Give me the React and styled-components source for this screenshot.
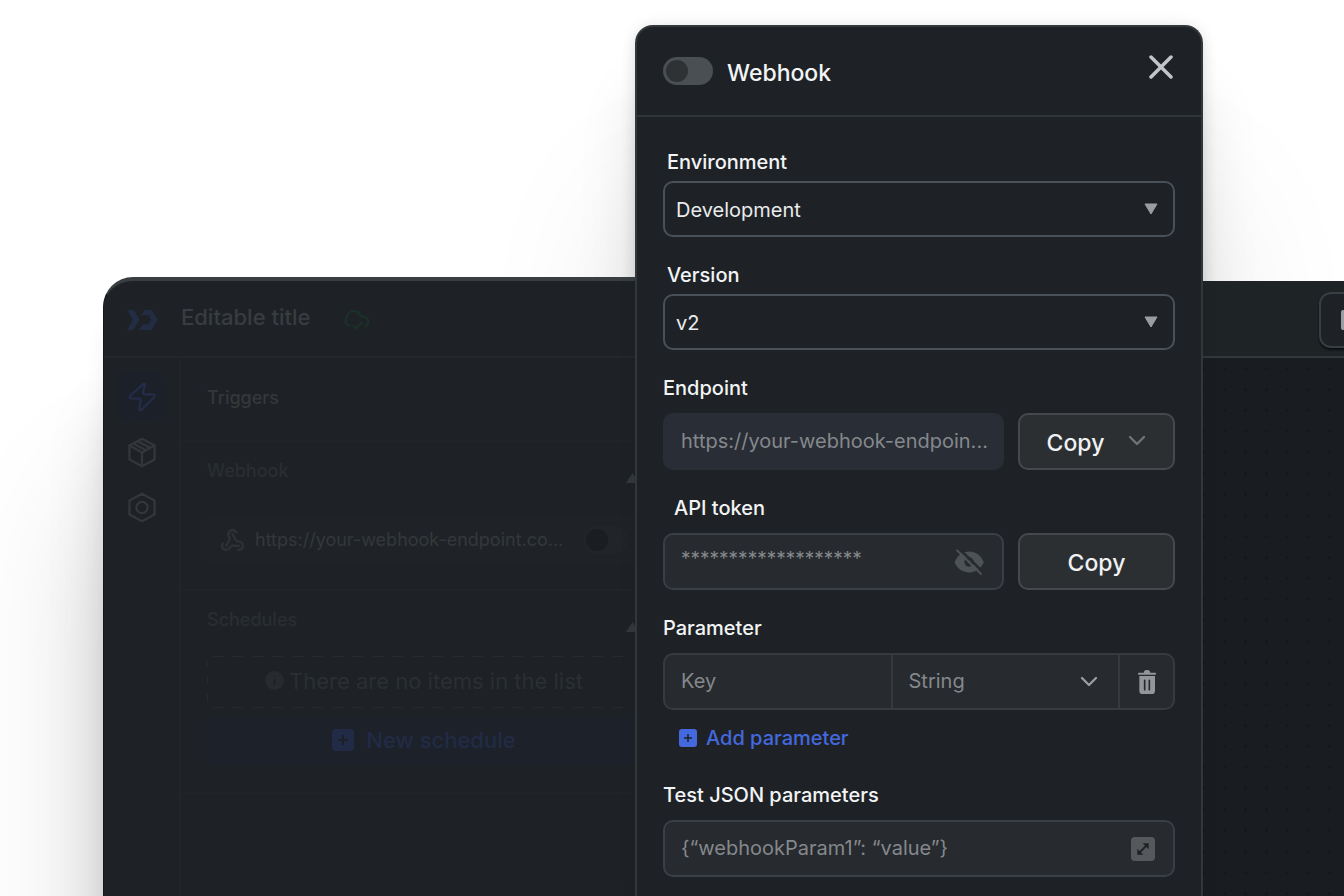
import React from "react";
import styled, { createGlobalStyle } from "styled-components";
import { Webhook as WebhookGlyph } from "lucide-react";

const GlobalStyle = createGlobalStyle`
  *, *::before, *::after { box-sizing: border-box; }
  body {
    margin: 0;
    background: #ffffff;
    font-family: Inter, "Noto Sans", sans-serif;
    font-size: 20px;
    line-height: 24px;
  }
  h1, h2, h3 { margin: 0; font-weight: 500; }
  p { margin: 0; }
  button, input, select { font: inherit; margin: 0; }
  button { cursor: pointer; }
  svg { display: block; flex: none; }
`;

/* ---------- stage ---------- */

const Stage = styled.div`
  display: grid;
  grid-template-columns: minmax(0, 1fr);
  min-height: 100vh;
  overflow: hidden;
  & > * { grid-area: 1 / 1; }
`;

const DialogShade = styled.div`
  justify-self: end;
  width: 568px;
  margin: 25px 141px 0 0;
  border-radius: 18px 18px 0 0;
  box-shadow: 0 180px 160px rgba(0, 0, 0, 0.11), 0 70px 60px rgba(0, 0, 0, 0.1), 0 6px 16px rgba(0, 0, 0, 0.07);
`;

/* ---------- editor window ---------- */

const Editor = styled.main`
  display: flex;
  margin: 277px -52px 0 103px;
`;

const EditorPane = styled.div`
  flex: 1;
  min-width: 0;
  display: flex;
  flex-direction: column;
  background: #1e2226;
  border-top: 4px solid #393e42;
  border-left: 1px solid #15181b;
  border-radius: 30px 0 0 0;
  box-shadow: 0 220px 150px rgba(0, 0, 0, 0.16), 0 130px 60px rgba(0, 0, 0, 0.12), 0 40px 20px rgba(0, 0, 0, 0.06);
`;

const PaneHeader = styled.header`
  display: flex;
  align-items: center;
  height: 77px;
  padding: 2px 23px 0;
  border-bottom: 2px solid #23272a;
`;

const EditorTitle = styled.h1`
  margin: 0 34px 0 23px;
  padding-bottom: 6px;
  font-size: 22px;
  color: #393c40;
  white-space: nowrap;
`;

const EditorBody = styled.div`
  flex: 1;
  display: flex;
`;

const SideNav = styled.nav`
  display: flex;
  flex-direction: column;
  align-items: center;
  gap: 5px;
  width: 77px;
  padding-top: 14px;
  border-right: 2px solid #212529;
`;

const NavButton = styled.button`
  display: grid;
  place-items: center;
  width: 50px;
  height: 50px;
  padding: 0;
  border: 0;
  border-radius: 14px;
  background: ${(p) => (p.$active ? "#1c2029" : "transparent")};
  color: ${(p) => (p.$active ? "#232c49" : "#33363a")};
`;

const TriggerPanel = styled.div`
  width: 486px;
`;

const PanelSection = styled.section`
  display: flex;
  flex-direction: column;
  padding: 17px 26px ${(p) => p.$bottom}px;
  border-bottom: 2px solid #202427;
`;

const PanelTitle = styled.h2`
  padding: 27px 26px 29px;
  border-bottom: 2px solid #202427;
  font-size: 18px;
  line-height: 26px;
  color: #35383b;
`;

const SectionHead = styled.div`
  display: flex;
  align-items: flex-end;
  justify-content: space-between;
  margin-bottom: ${(p) => p.$gap}px;
  padding-right: 2px;
  color: #2a2e31;
`;

const SectionName = styled.h3`
  font-size: 18px;
`;

const HookCard = styled.div`
  display: flex;
  align-items: center;
  height: 52px;
  padding: 0 13px;
  border-radius: 8px;
  background: #1f2327;
  color: #2d3134;
`;

const HookUrl = styled.span`
  flex: 1;
  margin-left: 10px;
  font-size: 18px;
  color: #34383b;
  white-space: nowrap;
`;

const dash = "#272b2e";
const EmptyBox = styled.div`
  display: flex;
  align-items: center;
  justify-content: center;
  gap: 5px;
  height: 52px;
  padding-bottom: 3px;
  border-radius: 8px;
  color: #2b2f32;
  font-size: 22px;
  background:
    repeating-linear-gradient(90deg, transparent 0 6px, ${dash} 6px 16px, transparent 16px 20px) top / 100% 1px no-repeat,
    repeating-linear-gradient(90deg, transparent 0 6px, ${dash} 6px 16px, transparent 16px 20px) bottom / 100% 1px no-repeat,
    repeating-linear-gradient(0deg, transparent 0 6px, ${dash} 6px 14px, transparent 14px 18px) left / 1px 100% no-repeat;
`;

const NewScheduleButton = styled.button`
  display: flex;
  align-items: center;
  justify-content: center;
  gap: 12px;
  height: 47px;
  margin-top: 10px;
  padding: 0 0 4px;
  border: 0;
  border-radius: 8px;
  background: #1d222a;
  color: #212b45;
  font-size: 22px;
  font-weight: 500;
`;

/* ---------- canvas on the right ---------- */

const CanvasPane = styled.div`
  flex: 0 0 436px;
  display: flex;
  flex-direction: column;
  margin-top: 4px;
  background: #1e2326;
`;

const CanvasHeader = styled(PaneHeader)`
  justify-content: flex-end;
  padding: 3px 21px 0;
  border-bottom-color: #34383b;
`;

const ToolButton = styled.button`
  display: grid;
  place-items: center;
  width: 56px;
  height: 56px;
  padding: 0;
  border: 2px solid #393e45;
  border-radius: 12px;
  background: #1e2226;
  box-shadow: 0 2px 2px #0d0f11;
  color: #9b9ea1;
`;

const DotGrid = styled.div`
  flex: 1;
  background: radial-gradient(circle, #15181b 1px, transparent 2px) 2px 0 / 21px 21px #191c20;
`;

/* ---------- dialog ---------- */

const Dialog = styled.section`
  position: relative;
  justify-self: end;
  width: 568px;
  margin: 25px 141px 0 0;
  border: 2px solid #32373a;
  border-bottom: 0;
  border-radius: 18px 18px 0 0;
  background: #1e2226;
  color: #f2f4f5;
  box-shadow: 0 0 16px rgba(0, 0, 0, 0.08);
`;

const DialogHeader = styled.header`
  display: flex;
  align-items: center;
  gap: 14px;
  height: 90px;
  padding: 0 28px 0 26px;
  border-bottom: 2px solid #2f3437;
`;

const Toggle = styled.input.attrs({ type: "checkbox", role: "switch" })`
  appearance: none;
  flex: none;
  width: ${(p) => (p.$dim ? 45 : 50)}px;
  height: 28px;
  padding: 3px;
  border-radius: 14px;
  background: ${(p) => (p.$dim ? "#212529" : "#4a4f53")};
  cursor: pointer;
  &::before {
    content: "";
    display: block;
    width: 22px;
    height: 22px;
    border-radius: 50%;
    background: ${(p) => (p.$dim ? "#1a1d21" : "#2e3235")};
  }
  &:checked::before { margin-left: auto; }
`;

const DialogTitle = styled.h2`
  flex: 1;
  padding-top: 3px;
  font-size: 23px;
  line-height: 28px;
`;

const IconButton = styled.button`
  display: grid;
  place-items: center;
  padding: 0;
  border: 0;
  background: transparent;
  color: ${(p) => p.$color || "#c3c6c8"};
`;

const CloseButton = styled(IconButton)`
  margin-bottom: 8px;
`;

const DialogBody = styled.form`
  display: flex;
  flex-direction: column;
  gap: 26px;
  padding: 33px 26px 16px;
`;

const FieldGroup = styled.div`
  display: flex;
  flex-direction: column;
  gap: ${(p) => (p.$tight ? 7 : 13)}px;
`;

const FieldLabel = styled.label`
  padding-left: ${(p) => p.$indent || 0}px;
  font-weight: 500;
`;

const SelectBox = styled.div`
  flex: 1;
  min-width: 0;
  display: grid;
  align-items: center;
  & > * { grid-area: 1 / 1; }
  & > svg {
    justify-self: end;
    margin-right: 17px;
    pointer-events: none;
    color: #9a9da1;
  }
`;

const SelectInput = styled.select`
  appearance: none;
  width: 100%;
  height: 56px;
  padding: 2px 40px 0 11px;
  border: 2px solid #4a5058;
  border-radius: 10px;
  background: transparent;
  color: #e9ebed;
`;

const Field = styled.div`
  display: flex;
  align-items: center;
  height: 57px;
  padding: 0 ${(p) => (p.$filled ? 8 : 18)}px 0 16px;
  border: 2px solid ${(p) => (p.$filled ? "#292d35" : "#393f45")};
  border-radius: 10px;
  background: ${(p) => (p.$filled ? "#292d35" : "#272a2e")};
`;

const FieldRow = styled.div`
  display: flex;
  gap: 14px;
  & > ${Field} {
    flex: 1;
    min-width: 0;
  }
`;

const TextInput = styled.input`
  flex: 1;
  min-width: 0;
  width: 100%;
  height: 28px;
  padding: 0 0 2px;
  border: 0;
  outline: 0;
  background: transparent;
  color: #84888c;
  text-overflow: ellipsis;
  &::placeholder { color: #84888c; opacity: 1; }
`;

const TokenInput = styled(TextInput)`
  height: 32px;
  padding-bottom: 6px;
  font-size: 19px;
`;

const CopyButton = styled.button`
  display: flex;
  align-items: center;
  justify-content: center;
  gap: 24px;
  flex: 0 0 157px;
  height: 57px;
  padding: 2px 0 0;
  border: 2px solid #45494c;
  border-radius: 10px;
  background: #2b2f32;
  color: #f0f1f2;
  font-size: 23px;
  font-weight: 500;
  & > svg { margin-bottom: 4px; color: #6f7478; }
`;

const ParamRow = styled.div`
  display: flex;
  height: 57px;
  border: 2px solid #373b3f;
  border-radius: 10px;
  background: #272a2e;
`;

const ParamCell = styled.div`
  display: flex;
  align-items: center;
  justify-content: center;
  flex: ${(p) => (p.$fixed ? "0 0 55px" : "1 1 0")};
  min-width: 0;
  padding: 0 ${(p) => (p.$fixed ? 0 : 16)}px;
  & + & { border-left: 2px solid #373b3f; }
`;

const TypeSelectBox = styled(SelectBox)`
  & > svg { margin-right: 4px; }
`;

const TypeSelect = styled.select`
  appearance: none;
  width: 100%;
  height: 28px;
  padding: 0 0 2px;
  border: 0;
  background: transparent;
  color: #84888c;
`;

const AddButton = styled.button`
  display: flex;
  align-items: center;
  align-self: flex-start;
  gap: 9px;
  height: 40px;
  margin: -5px 0 -1px;
  padding: 0 16px;
  border: 0;
  background: transparent;
  color: #4468de;
  font-weight: 500;
`;

/* ---------- drawings ---------- */

const Logo = () => (
  <svg width="31" height="20" viewBox="0 0 93 61" fill="#232c45" aria-hidden="true">
    <path d="M0 0H20L38 30 18 61H0L17 30Z" />
    <path d="M52 0H74L93 30 74 61H35L46 44H64L73 30 65 15H44Z" />
  </svg>
);

const CloudSaved = () => (
  <svg width="26" height="20" viewBox="0 0 78 60" fill="none" stroke="#1b3229" strokeWidth="6" strokeLinecap="round" strokeLinejoin="round" aria-hidden="true">
    <path d="M15 46C3 42 1 28 9 21C11 9 21 3 31 4C42 5 48 12 51 20C64 17 73 26 73 35C73 42 69 46 64 49" />
    <path d="M28 47L36 55 53 38" />
  </svg>
);

const Bolt = () => (
  <svg width="28" height="30" viewBox="0 0 84 90" fill="none" stroke="currentColor" strokeWidth="7" strokeLinejoin="round" aria-hidden="true">
    <path d="M47 5L6 42Q2 49 10 50H33Q39 50 38 56L34 82Q35 88 40 84L79 45Q82 38 75 37H50Q44 36 45 30L51 8Q51 3 47 5Z" />
  </svg>
);

const Cube = () => (
  <svg width="28" height="31" viewBox="0 0 84 94" fill="none" stroke="currentColor" strokeWidth="7" strokeLinejoin="round" strokeLinecap="round" aria-hidden="true">
    <path d="M42 5L80 26V68L42 89 4 68V26Z" />
    <path d="M4 26L42 47 80 26M42 47V89M16 20L54 40M29 13L67 33" />
  </svg>
);

const HexNut = () => (
  <svg width="28" height="31" viewBox="0 0 84 94" fill="none" stroke="currentColor" strokeWidth="7" strokeLinejoin="round" aria-hidden="true">
    <path d="M42 5L80 26V68L42 89 4 68V26Z" />
    <circle cx="42" cy="47" r="17" />
  </svg>
);

const TriangleUp = () => (
  <svg width="13" height="10" viewBox="0 0 13 10" fill="#34383b" aria-hidden="true">
    <path d="M6.500 0L13 10H0Z" />
  </svg>
);

const TriangleDown = () => (
  <svg width="14" height="12" viewBox="0 0 14 12" fill="currentColor" stroke="currentColor" strokeWidth="1" strokeLinejoin="round" aria-hidden="true">
    <path d="M1 1H13L7 11Z" />
  </svg>
);

const Chevron = () => (
  <svg width="18" height="11" viewBox="0 0 18 11" fill="none" stroke="currentColor" strokeWidth="2.300" strokeLinecap="round" strokeLinejoin="round" aria-hidden="true">
    <path d="M2 2L9 9 16 2" />
  </svg>
);

const Info = () => (
  <svg width="19" height="19" viewBox="0 0 19 19" aria-hidden="true">
    <circle cx="9.500" cy="9.500" r="9.500" fill="#272b2e" />
    <path d="M9.500 5V6M9.500 8V14" stroke="#1e2226" strokeWidth="2" />
  </svg>
);

const PlusTile = ({ size, plus }) => (
  <svg width={size} height={size} viewBox="0 0 18 18" aria-hidden="true">
    <rect width="18" height="18" rx="3" fill="currentColor" />
    <path d="M9 5V13M5 9H13" stroke={plus} strokeWidth="1.500" />
  </svg>
);

const Cross = () => (
  <svg width="24" height="24" viewBox="0 0 24 24" fill="none" stroke="currentColor" strokeWidth="3.500" strokeLinecap="round" aria-hidden="true">
    <path d="M2 2L22 22M22 2L2 22" />
  </svg>
);

const EyeOff = () => (
  <svg width="30" height="26" viewBox="103 85 90 78" aria-hidden="true">
    <path d="M105 125C120 82 177 82 192 125C177 166 120 166 105 125Z" fill="currentColor" />
    <circle cx="148" cy="124" r="14" fill="#272a2e" />
    <path d="M148 116A9 9 0 0 1 157 125L148 125Z" fill="currentColor" />
    <path d="M116 82L192 156" stroke="#272a2e" strokeWidth="8" />
    <path d="M112 89L184 160" stroke="currentColor" strokeWidth="6" strokeLinecap="round" />
  </svg>
);

const Trash = () => (
  <svg width="18" height="24" viewBox="0 0 54 72" aria-hidden="true">
    <path d="M17 8Q18 0 24 0H30Q36 0 37 8H52Q54 8 54 11T52 14H2Q0 14 0 11T2 8Z" fill="currentColor" />
    <path d="M4 18H51V62Q51 72 41 72H14Q4 72 4 62Z" fill="currentColor" />
    <path d="M20 31V59M34 31V59" stroke="#272a2e" strokeWidth="5" strokeLinecap="round" />
  </svg>
);

const Expand = () => (
  <svg width="24" height="24" viewBox="0 0 72 72" aria-hidden="true">
    <rect width="72" height="72" rx="11" fill="#55595c" />
    <path d="M26 46L46 26" stroke="#1e2226" strokeWidth="6" />
    <path d="M35 19H53V37ZM19 35V53H37Z" fill="#1e2226" />
  </svg>
);

const BlockGlyph = () => (
  <svg width="12" height="20" viewBox="0 0 12 20" fill="currentColor" aria-hidden="true">
    <rect width="12" height="20" rx="2" />
  </svg>
);

/* ---------- page ---------- */

export default function App() {
  return (
    <>
      <GlobalStyle />
      <Stage>
        <DialogShade />
        <Editor>
          <EditorPane>
            <PaneHeader>
              <Logo />
              <EditorTitle>Editable title</EditorTitle>
              <CloudSaved />
            </PaneHeader>
            <EditorBody>
              <SideNav aria-label="Editor">
                <NavButton $active aria-label="Triggers"><Bolt /></NavButton>
                <NavButton aria-label="Packages"><Cube /></NavButton>
                <NavButton aria-label="Settings"><HexNut /></NavButton>
              </SideNav>
              <TriggerPanel>
                <PanelTitle>Triggers</PanelTitle>
                <PanelSection $bottom={23}>
                  <SectionHead $gap={31}>
                    <SectionName>Webhook</SectionName>
                    <TriangleUp />
                  </SectionHead>
                  <HookCard>
                    <WebhookGlyph size={25} strokeWidth={2.5} />
                    <HookUrl>https://your-webhook-endpoint.co...</HookUrl>
                    <Toggle $dim aria-label="Enable webhook" />
                  </HookCard>
                </PanelSection>
                <PanelSection $bottom={27}>
                  <SectionHead $gap={24}>
                    <SectionName>Schedules</SectionName>
                    <TriangleUp />
                  </SectionHead>
                  <EmptyBox>
                    <Info />
                    <p>There are no items in the list</p>
                  </EmptyBox>
                  <NewScheduleButton>
                    <PlusTile size={22} plus="#1c2029" />
                    New schedule
                  </NewScheduleButton>
                </PanelSection>
              </TriggerPanel>
            </EditorBody>
          </EditorPane>
          <CanvasPane>
            <CanvasHeader>
              <ToolButton aria-label="View"><BlockGlyph /></ToolButton>
            </CanvasHeader>
            <DotGrid />
          </CanvasPane>
        </Editor>

        <Dialog role="dialog" aria-labelledby="dialog-title">
          <DialogHeader>
            <Toggle id="webhook-on" />
            <DialogTitle id="dialog-title">
              <label htmlFor="webhook-on">Webhook</label>
            </DialogTitle>
            <CloseButton aria-label="Close"><Cross /></CloseButton>
          </DialogHeader>
          <DialogBody onSubmit={(e) => e.preventDefault()}>
            <FieldGroup $tight>
              <FieldLabel htmlFor="environment" $indent={4}>Environment</FieldLabel>
              <SelectBox>
                <SelectInput id="environment"><option>Development</option></SelectInput>
                <TriangleDown />
              </SelectBox>
            </FieldGroup>

            <FieldGroup $tight>
              <FieldLabel htmlFor="version" $indent={4}>Version</FieldLabel>
              <SelectBox>
                <SelectInput id="version"><option>v2</option></SelectInput>
                <TriangleDown />
              </SelectBox>
            </FieldGroup>

            <FieldGroup>
              <FieldLabel htmlFor="endpoint">Endpoint</FieldLabel>
              <FieldRow>
                <Field $filled>
                  <TextInput id="endpoint" readOnly value="https://your-webhook-endpoin..." />
                </Field>
                <CopyButton type="button">Copy<Chevron /></CopyButton>
              </FieldRow>
            </FieldGroup>

            <FieldGroup>
              <FieldLabel htmlFor="token" $indent={11}>API token</FieldLabel>
              <FieldRow>
                <Field>
                  <TokenInput id="token" readOnly value="*******************" />
                  <IconButton type="button" aria-label="Show token" $color="#4d5255"><EyeOff /></IconButton>
                </Field>
                <CopyButton type="button">Copy</CopyButton>
              </FieldRow>
            </FieldGroup>

            <FieldGroup>
              <FieldLabel htmlFor="param-key">Parameter</FieldLabel>
              <ParamRow>
                <ParamCell><TextInput id="param-key" placeholder="Key" /></ParamCell>
                <ParamCell>
                  <TypeSelectBox>
                    <TypeSelect aria-label="Parameter type"><option>String</option></TypeSelect>
                    <Chevron />
                  </TypeSelectBox>
                </ParamCell>
                <ParamCell $fixed>
                  <IconButton type="button" aria-label="Delete parameter" $color="#94979a"><Trash /></IconButton>
                </ParamCell>
              </ParamRow>
              <AddButton type="button"><PlusTile size={18} plus="#1e2226" />Add parameter</AddButton>
            </FieldGroup>

            <FieldGroup>
              <FieldLabel htmlFor="json">Test JSON parameters</FieldLabel>
              <Field>
                <TextInput id="json" placeholder="{“webhookParam1”: “value”}" />
                <IconButton type="button" aria-label="Expand editor"><Expand /></IconButton>
              </Field>
            </FieldGroup>
          </DialogBody>
        </Dialog>
      </Stage>
    </>
  );
}
